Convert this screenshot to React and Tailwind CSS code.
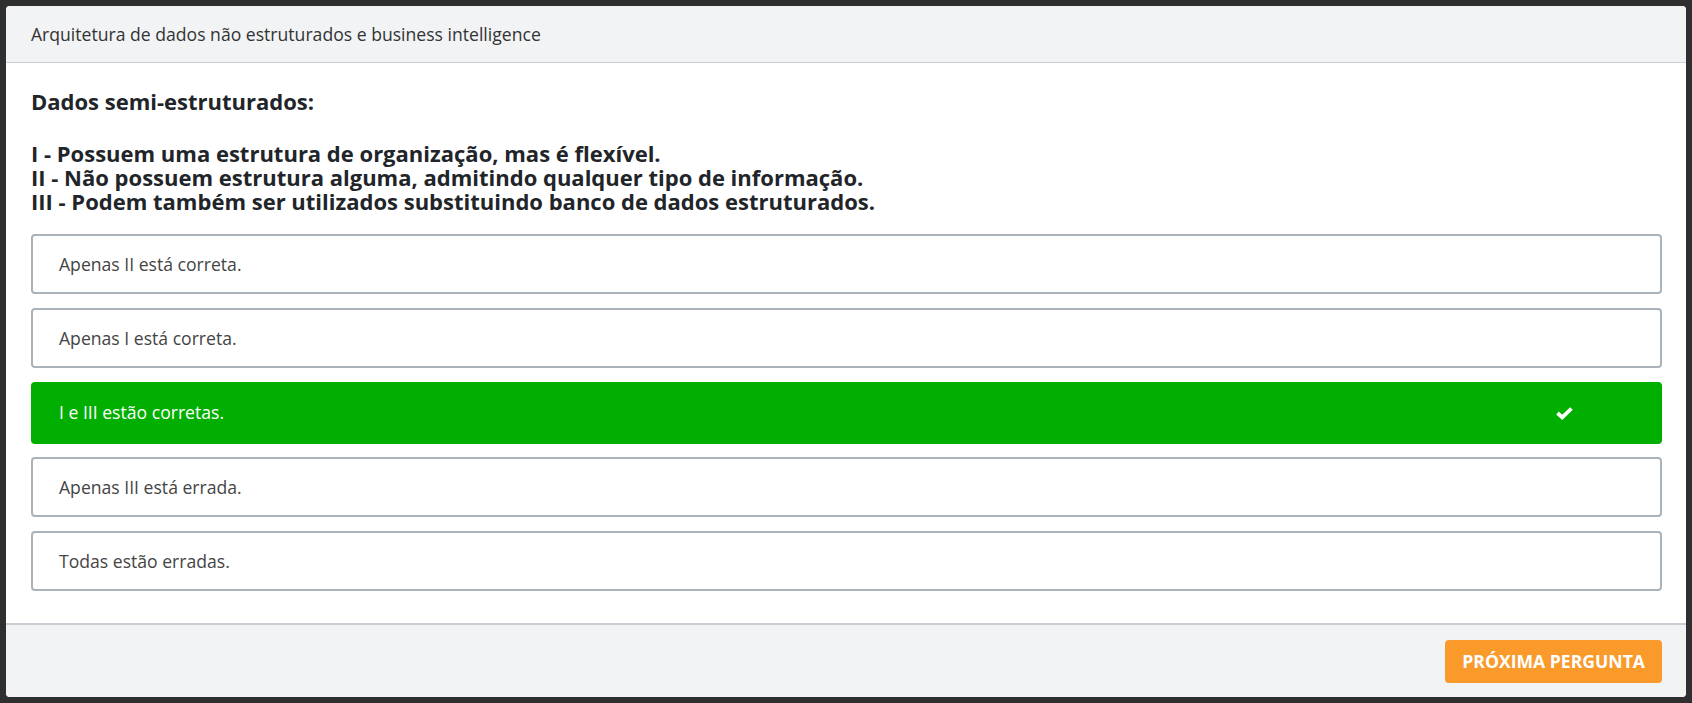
import React from 'react';

const options = [
  { id: 1, text: 'Apenas II está correta.', correct: false },
  { id: 2, text: 'Apenas I está correta.', correct: false },
  { id: 3, text: 'I e III estão corretas.', correct: true },
  { id: 4, text: 'Apenas III está errada.', correct: false },
  { id: 5, text: 'Todas estão erradas.', correct: false },
];

const CheckIcon = () => (
  <svg width="19" height="14" viewBox="0 0 19 14" fill="none">
    <path d="M2.5 7 L7.2 11.4 L16.5 2.5" stroke="#fff" strokeWidth="3.8" strokeLinejoin="miter" />
  </svg>
);

const App = () => {
  return (
    <div className="h-screen bg-[#2f2f2f] p-[6px] font-['Open_Sans',sans-serif]">
      <div className="h-full bg-white rounded-[4px] flex flex-col overflow-hidden">
        {/* Header */}
        <div className="h-[57px] bg-[#f2f3f5] border-b border-[#c9ced4] flex items-center pl-[25px]">
          <span className="text-[17.6px] text-[#333]">
            Arquitetura de dados não estruturados e business intelligence
          </span>
        </div>

        {/* Question */}
        <div className="flex-1 pl-[25px] pr-[24px] pt-[26px]">
          <p className="text-[22px] leading-[24px] font-bold text-[#212529]">Dados semi-estruturados:</p>
          <div className="mt-[28px] text-[22px] leading-[24px] font-bold text-[#212529]">
            <p>I - Possuem uma estrutura de organização, mas é flexível.</p>
            <p>II - Não possuem estrutura alguma, admitindo qualquer tipo de informação.</p>
            <p>III - Podem também ser utilizados substituindo banco de dados estruturados.</p>
          </div>

          <div className="mt-[21px] flex flex-col gap-[14px]">
            {options.map((opt) =>
              opt.correct ? (
                <div
                  key={opt.id}
                  className="h-[62px] -my-[0.5px] rounded-[4px] bg-[#00af00] flex items-center justify-between pl-[28px] pr-[88px]"
                >
                  <span className="text-[17.6px] text-white">{opt.text}</span>
                  <CheckIcon />
                </div>
              ) : (
                <div
                  key={opt.id}
                  className="h-[60px] rounded-[4px] border-2 border-[#aab2bb] bg-white flex items-center pl-[26px]"
                >
                  <span className="text-[17.6px] text-[#444]">{opt.text}</span>
                </div>
              )
            )}
          </div>
        </div>

        {/* Footer */}
        <div className="h-[74px] bg-[#f2f3f5] border-t-2 border-[#c9ced4] flex justify-end items-start pt-[15px] pr-[24px]">
          <button className="h-[43px] px-[17px] rounded-[4px] bg-[#f99a2b] text-white text-[17.6px] font-bold uppercase">
            Próxima pergunta
          </button>
        </div>
      </div>
    </div>
  );
};

export default App;
